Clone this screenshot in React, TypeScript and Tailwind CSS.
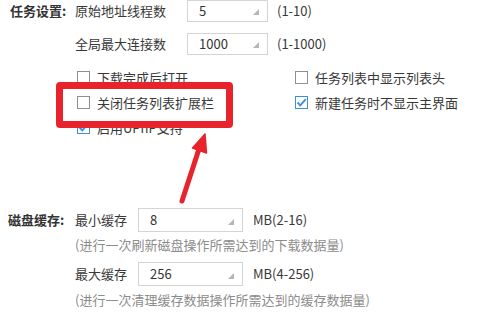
import React from 'react';

const font = { fontFamily: '"Noto Sans CJK SC", "Noto Sans", sans-serif' };

function Spin({ value, width, height }: { value: string; width: string; height: string }) {
  return (
    <div className={`relative ${width} ${height} border border-[#d4d4d4] bg-white flex items-center pl-[11px] text-[13px] text-[#333]`}>
      {value}
      {/* little resize grip in the corner */}
      <svg className="absolute right-[8px] bottom-[6px]" width="6" height="6" viewBox="0 0 6 6">
        <polygon points="6,0 6,6 0,6" fill="#b5b5b5" />
      </svg>
    </div>
  );
}

function Check({ label, checked = false }: { label?: string; checked?: boolean }) {
  if (!label) return <div className="h-[25px]" />;
  return (
    <div className="h-[25px] flex items-center">
      <span
        className={`w-[13px] h-[13px] border bg-white flex items-center justify-center flex-shrink-0 ${
          checked ? 'border-[#3d8de0]' : 'border-[#8f8f8f]'
        }`}
      >
        {checked && (
          <svg width="11" height="11" viewBox="0 0 11 11">
            <path d="M1.5 5.5 L4.3 8.3 L9.8 2.2" fill="none" stroke="#3d8de0" strokeWidth="1.9" />
          </svg>
        )}
      </span>
      <span className="ml-[7px] text-[13px] text-[#383838] whitespace-nowrap">{label}</span>
    </div>
  );
}

export default function App() {
  return (
    <div className="relative w-[487px] h-[328px] bg-white overflow-hidden" style={font}>
      {/* Task settings */}
      <div className="flex">
        <div className="w-[75px] pl-[10px] h-[22px] leading-[22px] text-[13px] font-bold text-[#333] whitespace-nowrap">任务设置:</div>
        <div className="flex flex-col">
          <div className="flex items-center">
            <div className="w-[112px] text-[13px] text-[#383838] whitespace-nowrap">原始地址线程数</div>
            <Spin value="5" width="w-[81px]" height="h-[22px]" />
            <div className="ml-[9px] text-[13px] text-[#383838]">(1-10)</div>
          </div>
          <div className="flex items-center mt-[11px]">
            <div className="w-[112px] text-[13px] text-[#383838] whitespace-nowrap">全局最大连接数</div>
            <Spin value="1000" width="w-[81px]" height="h-[22px]" />
            <div className="ml-[9px] text-[13px] text-[#383838]">(1-1000)</div>
          </div>
          <div className="grid grid-cols-[218px_1fr] mt-[10px] pl-[2px]">
            <Check label="下载完成后打开" />
            <Check label="任务列表中显示列表头" />
            <Check label="关闭任务列表扩展栏" />
            <Check label="新建任务时不显示主界面" checked />
            <Check label="启用UPnP支持" checked />
            <Check />
          </div>
        </div>
      </div>

      {/* Disk cache */}
      <div className="flex mt-[68px]">
        <div className="w-[75px] pl-[8px] h-[24px] leading-[24px] text-[13px] font-bold text-[#333] whitespace-nowrap">磁盘缓存:</div>
        <div className="flex flex-col">
          <div className="flex items-center">
            <div className="w-[63px] text-[13px] text-[#383838] whitespace-nowrap">最小缓存</div>
            <Spin value="8" width="w-[105px]" height="h-[24px]" />
            <div className="ml-[10px] text-[13px] text-[#383838]">MB(2-16)</div>
          </div>
          <div className="leading-[26px] text-[13px] text-[#8c8c8c] whitespace-nowrap">(进行一次刷新磁盘操作所需达到的下载数据量)</div>
          <div className="flex items-center mt-[4px]">
            <div className="w-[63px] text-[13px] text-[#383838] whitespace-nowrap">最大缓存</div>
            <Spin value="256" width="w-[105px]" height="h-[24px]" />
            <div className="ml-[10px] text-[13px] text-[#383838]">MB(4-256)</div>
          </div>
          <div className="mt-[1px] leading-[26px] text-[13px] text-[#8c8c8c] whitespace-nowrap">(进行一次清理缓存数据操作所需达到的缓存数据量)</div>
        </div>
      </div>

      {/* Annotation: red highlight box */}
      <div className="absolute left-[56px] top-[82px] w-[177px] h-[46px] border-[7px] border-[#e8232b] rounded-[4px]" />

      {/* Annotation: arrow */}
      <svg className="absolute left-0 top-0" width="487" height="328" viewBox="0 0 487 328">
        <line x1="182" y1="201" x2="199" y2="149" stroke="#e8232b" strokeWidth="5" strokeLinecap="round" />
        <polygon points="205,134 206.5,153 192.5,148" fill="#e8232b" stroke="#e8232b" strokeWidth="1.5" strokeLinejoin="round" />
      </svg>
    </div>
  );
}
